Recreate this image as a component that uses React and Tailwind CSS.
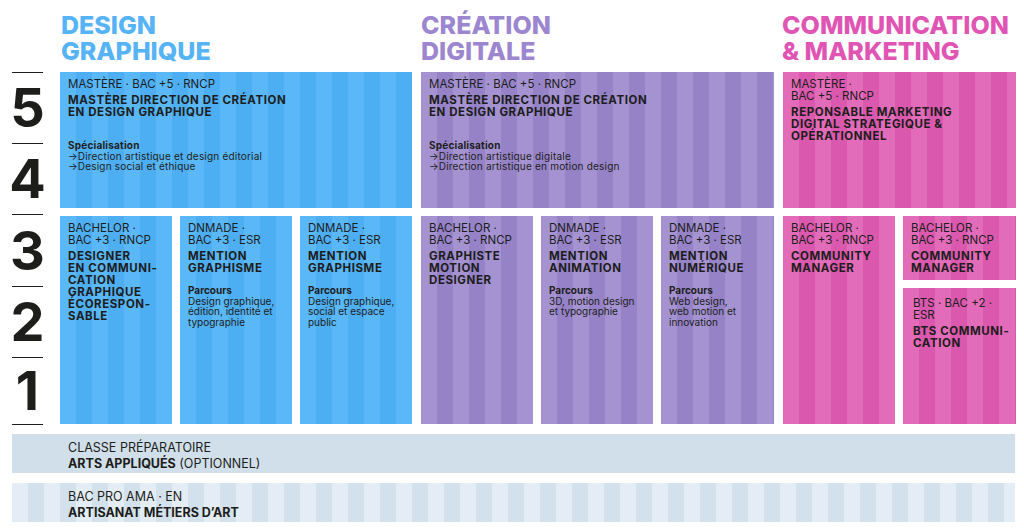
import React from 'react';

const stripes = {
  blue: 'bg-[repeating-linear-gradient(90deg,#5ab7f8_0px,#5ab7f8_16px,#4eaef3_16px,#4eaef3_32px)]',
  purple: 'bg-[repeating-linear-gradient(90deg,#a593d1_0px,#a593d1_16px,#9582c7_16px,#9582c7_32px)]',
  pink: 'bg-[repeating-linear-gradient(90deg,#e36cba_0px,#e36cba_16px,#da58ad_16px,#da58ad_32px)]',
};

const Label = ({ children }) => (
  <div className="text-[11.5px] leading-[12px] uppercase text-[#1d1d1b]">{children}</div>
);

const Title = ({ children }) => (
  <div className="mt-[4px] text-[11.5px] leading-[12px] tracking-[0.05em] font-bold uppercase whitespace-nowrap text-[#1d1d1b]">
    {children}
  </div>
);

const Details = ({ head, lines }) => (
  <div className="mt-[11px] text-[10px] leading-[10.7px] text-[#1d1d1b]">
    <div className="font-bold">{head}</div>
    {lines.map((l, i) => (
      <div key={i}>{l}</div>
    ))}
  </div>
);

const Card = ({ color, className = '', children }) => (
  <div className={`${stripes[color]} px-[8px] pt-[6px] ${className}`}>{children}</div>
);

const TopCard = ({ color, label, title, spec }) => (
  <Card color={color} className="h-[136px]">
    <Label>{label}</Label>
    <Title>{title}</Title>
    {spec && (
      <div className="mt-[22px] text-[10px] leading-[10.5px] tracking-[0.02em] text-[#1d1d1b]">
        <div className="font-bold">Spécialisation</div>
        {spec.map((s, i) => (
          <div key={i}>→{s}</div>
        ))}
      </div>
    )}
  </Card>
);

const Header = ({ color, className = '', children }) => (
  <div className={`text-[25px] leading-[26px] font-extrabold uppercase ${color} ${className}`}>{children}</div>
);

const App = () => {
  const levels = [
    { n: '5', h: 'h-[71px]' },
    { n: '4', h: 'h-[71px]' },
    { n: '3', h: 'h-[72px]' },
    { n: '2', h: 'h-[71px]' },
    { n: '1', h: 'h-[67px]' },
  ];

  return (
    <div className="w-[1024px] h-[532px] bg-white font-['Inter',sans-serif] overflow-hidden">
      {/* Headers */}
      <div className="h-[72px] flex pl-[61px] pt-[12px]">
        <Header color="text-[#55b3f6]" className="w-[360px]">
          Design
          <br />
          Graphique
        </Header>
        <Header color="text-[#9d86d0]" className="w-[361px]">
          Création
          <br />
          Digitale
        </Header>
        <Header color="text-[#e055b4]">
          Communication
          <br />& Marketing
        </Header>
      </div>

      {/* Grid */}
      <div className="flex pl-[12px]">
        <div className="w-[31px] flex flex-col border-b-[1.5px] border-[#1d1d1b]">
          {levels.map((l) => (
            <div
              key={l.n}
              className={`${l.h} border-t-[1.5px] border-[#1d1d1b] flex items-center justify-center text-[54px] leading-none font-bold text-[#1d1d1b]`}
            >
              {l.n}
            </div>
          ))}
        </div>

        <div className="ml-[17px] flex gap-[9px]">
          {/* Design graphique */}
          <div className="w-[352px] flex flex-col gap-[8px]">
            <TopCard
              color="blue"
              label="Mastère · Bac +5 · RNCP"
              title={<>Mastère direction de création<br />en design graphique</>}
              spec={['Direction artistique et design éditorial', 'Design social et éthique']}
            />
            <div className="h-[208px] flex gap-[8px]">
              <Card color="blue" className="w-[112px]">
                <Label>Bachelor ·<br />Bac +3 · RNCP</Label>
                <Title>Designer<br />en communi-<br />cation<br />graphique<br />écorespon-<br />sable</Title>
              </Card>
              <Card color="blue" className="w-[112px]">
                <Label>DNMADE ·<br />Bac +3 · ESR</Label>
                <Title>Mention<br />graphisme</Title>
                <Details head="Parcours" lines={['Design graphique,', 'édition, identité et', 'typographie']} />
              </Card>
              <Card color="blue" className="w-[112px]">
                <Label>DNMADE ·<br />Bac +3 · ESR</Label>
                <Title>Mention<br />graphisme</Title>
                <Details head="Parcours" lines={['Design graphique,', 'social et espace', 'public']} />
              </Card>
            </div>
          </div>

          {/* Création digitale */}
          <div className="w-[353px] flex flex-col gap-[8px]">
            <TopCard
              color="purple"
              label="Mastère · Bac +5 · RNCP"
              title={<>Mastère direction de création<br />en design graphique</>}
              spec={['Direction artistique digitale', 'Direction artistique en motion design']}
            />
            <div className="h-[208px] flex gap-[8px]">
              <Card color="purple" className="w-[112px]">
                <Label>Bachelor ·<br />Bac +3 · RNCP</Label>
                <Title>Graphiste<br />motion<br />designer</Title>
              </Card>
              <Card color="purple" className="w-[112px]">
                <Label>DNMADE ·<br />Bac +3 · ESR</Label>
                <Title>Mention<br />animation</Title>
                <Details head="Parcours" lines={['3D, motion design', 'et typographie']} />
              </Card>
              <Card color="purple" className="w-[113px]">
                <Label>DNMADE ·<br />Bac +3 · ESR</Label>
                <Title>Mention<br />numérique</Title>
                <Details head="Parcours" lines={['Web design,', 'web motion et', 'innovation']} />
              </Card>
            </div>
          </div>

          {/* Communication & marketing */}
          <div className="w-[233px] flex flex-col gap-[8px]">
            <TopCard
              color="pink"
              label={<>Mastère ·<br />Bac +5 · RNCP</>}
              title={<>Reponsable marketing<br />digital stratégique &amp;<br />opérationnel</>}
            />
            <div className="h-[208px] flex gap-[8px]">
              <Card color="pink" className="w-[112px]">
                <Label>Bachelor ·<br />Bac +3 · RNCP</Label>
                <Title>Community<br />manager</Title>
              </Card>
              <div className="w-[113px] flex flex-col gap-[8px]">
                <Card color="pink" className="h-[64px]">
                  <Label>Bachelor ·<br />Bac +3 · RNCP</Label>
                  <Title>Community<br />manager</Title>
                </Card>
                <Card color="pink" className="flex-1 !pl-[10px] !pt-[9px]">
                  <Label>BTS · Bac +2 ·<br />ESR</Label>
                  <Title>BTS communi-<br />cation</Title>
                </Card>
              </div>
            </div>
          </div>
        </div>
      </div>

      {/* Bottom bars */}
      <div className="mt-[9px] mx-[12px] w-[1003px] flex flex-col gap-[10px]">
        <div className="h-[39px] bg-[#d0dfea] pl-[56px] pt-[6px] text-[12.5px] leading-[16px] uppercase text-[#1d1d1b]">
          <div>Classe préparatoire</div>
          <div>
            <span className="font-bold">Arts appliqués</span> (optionnel)
          </div>
        </div>
        <div className="h-[39px] bg-[repeating-linear-gradient(90deg,#e4edf5_0px,#e4edf5_16px,#d3e1ec_16px,#d3e1ec_32px)] pl-[56px] pt-[6px] text-[12.5px] leading-[16px] uppercase text-[#1d1d1b]">
          <div>Bac pro AMA · EN</div>
          <div className="font-bold">Artisanat métiers d’art</div>
        </div>
      </div>
    </div>
  );
};

export default App;
